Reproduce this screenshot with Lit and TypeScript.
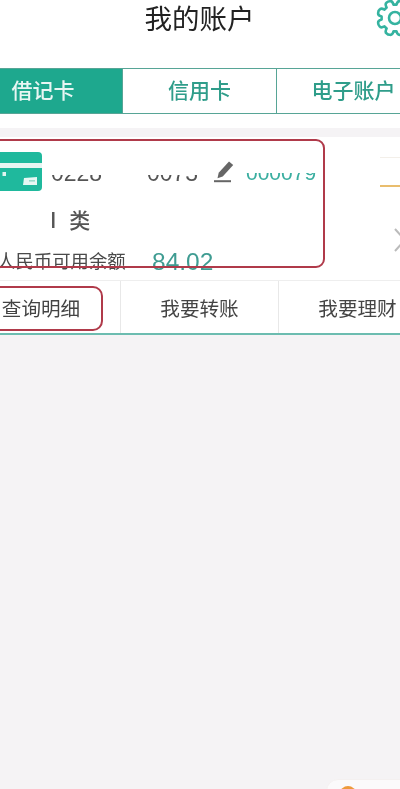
import { LitElement, html, css, svg } from "lit";
import { customElement } from "lit/decorators.js";

function gearPath(cx: number, cy: number, rOut: number, rIn: number, teeth: number) {
  const pts: string[] = [];
  const step = (Math.PI * 2) / teeth;
  for (let i = 0; i < teeth; i++) {
    const a = i * step + step / 2;
    const p = (r: number, d: number) =>
      `${(cx + r * Math.cos(a + d)).toFixed(1)} ${(cy + r * Math.sin(a + d)).toFixed(1)}`;
    pts.push(`${i === 0 ? "M" : "L"}${p(rIn, -step * 0.36)}`);
    pts.push(`Q${p(rOut * 1.0, -step * 0.3)} ${p(rOut, -step * 0.14)}`);
    pts.push(`Q${p(rOut * 1.05, 0)} ${p(rOut, step * 0.14)}`);
    pts.push(`Q${p(rOut * 1.0, step * 0.3)} ${p(rIn, step * 0.36)}`);
  }
  return pts.join(" ") + "Z";
}

@customElement("app-root")
export class AppRoot extends LitElement {
  static styles = css`
    :host {
      display: block;
      position: relative;
      width: 400px;
      height: 789px;
      overflow: hidden;
      background: #f5f3f5;
      font-family: "Noto Sans CJK SC", "Noto Sans", sans-serif;
      color: #444;
    }
    .blur { filter: blur(0.5px); height: 100%; }
    .top { background: #fff; height: 128px; }
    .header {
      height: 68px;
      display: grid;
      grid-template-columns: 1fr auto 1fr;
      padding-right: 1px;
    }
    .title {
      font-size: 27.5px;
      line-height: 34px;
      color: #222;
    }
    .gear {
      justify-self: end;
      width: 46px;
      height: 46px;
      margin: -5px -19px 0 0;
    }
    .tabs {
      display: grid;
      grid-template-columns: repeat(3, 154px);
      margin-left: -32px;
      width: 462px;
      height: 46px;
      box-sizing: border-box;
      border-top: 1.5px solid #57a596;
      border-bottom: 1.5px solid #57a596;
    }
    .tab {
      display: flex;
      align-items: center;
      justify-content: center;
      font-size: 21px;
      font-weight: 500;
      color: #2f9d8a;
      border-left: 1.5px solid #57a596;
      box-sizing: border-box;
      padding-bottom: 4px;
    }
    .tab.on { background: #1ea88e; color: #e8f6f3; border-left: 0; padding-right: 4px; }
    .card {
      margin-top: 9px;
      height: 143px;
      background: #fff;
      display: flex;
      box-sizing: border-box;
      padding-top: 15px;
    }
    .main { flex: 1; min-width: 0; }
    .row { display: flex; align-items: flex-end; height: 39px; }
    .cardicon { width: 42px; height: 39px; flex: none; }
    .clip {
      display: block;
      height: 7px;
      overflow: hidden;
      margin-bottom: 9px;
      flex: none;
    }
    .clip span {
      display: block;
      font-family: "Liberation Sans", sans-serif;
      line-height: 23px;
      margin-top: -13px;
    }
    .n1 { font-size: 23px; color: #555; margin-left: 9px; width: 54px; }
    .n2 { font-size: 23px; color: #555; margin-left: 42px; width: 54px; }
    .n3 { font-size: 21px; color: #3aaea0; margin-left: 12px; margin-bottom: 11px; }
    .n3 span { margin-top: -12.5px; }
    .pen { width: 20px; height: 22px; margin: 0 0 8px 13px; flex: none; }
    .cls {
      margin: 14px 0 0 50px;
      font-size: 21px;
      font-weight: 500;
      line-height: 28px;
      color: #555;
      letter-spacing: 0;
      word-spacing: 8px;
      filter: blur(0.7px);
    }
    .bal {
      display: flex;
      align-items: center;
      margin: 14px 0 0 -3px;
      height: 30px;
      white-space: nowrap;
    }
    .bal .lab { font-size: 18.4px; color: #4a4a4a; width: 155px; flex: none; margin-top: -4px; }
    .bal .amt {
      font-family: "Liberation Sans", sans-serif;
      font-size: 24.5px;
      color: #3f9c92;
    }
    .side {
      width: 20px;
      flex: none;
      display: flex;
      flex-direction: column;
      align-items: flex-start;
    }
    .faint { width: 20px; height: 1px; background: #f3efe9; margin-top: 5px; }
    .dash { width: 20px; height: 2px; background: #e9bd6d; margin-top: 27px; }
    .chev { width: 12px; height: 26px; margin: 40px 0 0 14px; }
    .acts {
      display: grid;
      grid-template-columns: repeat(3, 158px);
      margin-left: -38px;
      width: 474px;
      height: 55px;
      background: #fff;
      box-sizing: border-box;
      border-top: 1px solid #eee;
      border-bottom: 2px solid #6cbcb0;
    }
    .act {
      display: flex;
      align-items: center;
      justify-content: center;
      font-size: 19.6px;
      color: #444;
      box-sizing: border-box;
    }
    .act + .act { border-left: 1px solid #e8e8e8; }
    .mark {
      position: absolute;
      border: 2px solid #b03a4a;
      box-sizing: border-box;
    }
    .m1 { left: -12px; top: 139px; width: 337px; height: 129px; border-radius: 9px; }
    .m2 { left: -12px; top: 286px; width: 115px; height: 45px; border-radius: 10px; }
    .blob {
      position: absolute;
      left: 326px;
      top: 779px;
      width: 110px;
      height: 40px;
      border-radius: 12px;
      background: #fbfafb;
      border: 1px solid #f4f0f0;
      display: flex;
      padding: 6px 0 0 13px;
      box-sizing: border-box;
    }
    .dot { width: 16px; height: 16px; border-radius: 50%; background: #ee9a3c; }
  `;

  render() {
    return html`
      <div class="blur">
        <div class="top">
          <div class="header">
            <span></span>
            <div class="title">我的账户</div>
            <svg class="gear" viewBox="0 0 46 46" fill="none" stroke="#35b3a0" stroke-width="2.6" stroke-linejoin="round">
              ${svg`<path d=${gearPath(23, 23, 17.5, 13.5, 8)}></path>
              <circle cx="23" cy="23" r="6"></circle>`}
            </svg>
          </div>
          <div class="tabs">
            <div class="tab on">借记卡</div>
            <div class="tab">信用卡</div>
            <div class="tab">电子账户</div>
          </div>
        </div>
        <div class="card">
          <div class="main">
            <div class="row">
              <svg class="cardicon" viewBox="0 0 42 39">
                <path d="M0 0H38a4 4 0 0 1 4 4V35a4 4 0 0 1-4 4H0Z" fill="#1fb99d"></path>
                <rect x="0" y="11" width="42" height="5" fill="#e8f5f2"></rect>
                <rect x="2.5" y="20" width="3.5" height="4" fill="#dff5f0"></rect>
                <path d="M24 26L37 25V33H23Z" fill="#e6f7f3"></path>
                <rect x="29" y="28" width="6" height="1.6" fill="#9adccd"></rect>
              </svg>
              <div class="clip n1"><span>0228</span></div>
              <div class="clip n2"><span>0073</span></div>
              <svg class="pen" viewBox="0 0 20 22" fill="#666">
                <path d="M15 0.5l4.2 3.4-10.5 11.6-5.2 1.7 1.2-5.4z"></path>
                <rect x="0" y="19.2" width="17" height="2"></rect>
              </svg>
              <div class="clip n3"><span>000079</span></div>
            </div>
            <div class="cls">I 类</div>
            <div class="bal">
              <span class="lab">人民币可用余额</span>
              <span class="amt">84.02</span>
            </div>
          </div>
          <div class="side">
            <div class="faint"></div>
            <div class="dash"></div>
            <svg class="chev" viewBox="0 0 12 26" fill="none" stroke="#bbb" stroke-width="2">
              <path d="M1 2L11 13L1 24"></path>
            </svg>
          </div>
        </div>
        <div class="acts">
          <div class="act">查询明细</div>
          <div class="act">我要转账</div>
          <div class="act">我要理财</div>
        </div>
        <div class="mark m1"></div>
        <div class="mark m2"></div>
        <div class="blob"><div class="dot"></div></div>
      </div>
    `;
  }
}
